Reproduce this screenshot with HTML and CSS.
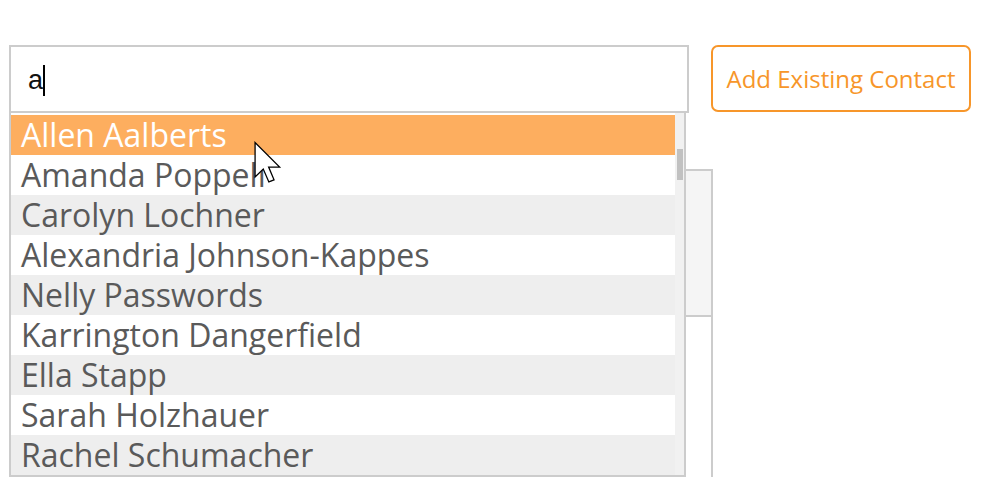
FILE: index.html
```html
<!DOCTYPE html>
<html lang="en">
<head>
<meta charset="utf-8">
<title>Add Existing Contact</title>
<link rel="stylesheet" href="styles.css">
</head>
<body>
<div class="page">
  <div class="top-row">
    <div class="search-wrap">
      <div class="search-field"><span class="typed">a</span><span class="caret"></span></div>
      <div class="dropdown">
        <ul class="results">
          <li class="item active">Allen Aalberts</li>
          <li class="item">Amanda Poppell</li>
          <li class="item alt">Carolyn Lochner</li>
          <li class="item">Alexandria Johnson-Kappes</li>
          <li class="item alt">Nelly Passwords</li>
          <li class="item">Karrington Dangerfield</li>
          <li class="item alt">Ella Stapp</li>
          <li class="item">Sarah Holzhauer</li>
          <li class="item alt">Rachel Schumacher</li>
        </ul>
        <div class="scrollbar"><div class="thumb"></div></div>
      </div>
    </div>
    <button class="add-btn" type="button">Add Existing Contact</button>
  </div>
  <div class="panel">
    <div class="panel-head"></div>
    <div class="panel-body"></div>
  </div>
</div>
<svg class="pointer" width="28" height="44" viewBox="0 0 13 20" xmlns="http://www.w3.org/2000/svg">
  <path d="M0.5 0.5 L0.5 16.5 L4.3 12.8 L6.9 18.8 L9.3 17.8 L6.8 11.9 L11.9 11.9 Z" fill="#fff" stroke="#000" stroke-width="0.6" stroke-linejoin="miter"/>
</svg>
</body>
</html>
```
FILE: styles.css
```css
html, body {
  margin: 0;
  padding: 0;
  background: #fff;
}
body {
  font-family: "Open Sans", "Liberation Sans", sans-serif;
  overflow: hidden;
}
.page {
  padding: 45px 0 0 9px;
}
.top-row {
  display: flex;
  gap: 22px;
  align-items: flex-start;
}
.search-wrap {
  position: relative;
  width: 680px;
}
.search-field {
  box-sizing: border-box;
  height: 68px;
  border: 2px solid #cccccc;
  background: #fff;
  display: flex;
  align-items: center;
  padding-left: 17px;
  font-family: "Liberation Sans", Arial, sans-serif;
  font-size: 27px;
  color: #111;
}
.typed {
  line-height: 30px;
  margin-top: 2px;
}
.caret {
  display: inline-block;
  width: 2px;
  height: 31px;
  background: #000;
  margin-left: 0;
  margin-top: 2px;
}
.dropdown {
  position: absolute;
  top: 100%;
  left: 0;
  z-index: 5;
  box-sizing: border-box;
  width: 677px;
  height: 364px;
  border: 2px solid #cccccc;
  border-top: 0;
  background: #fff;
  display: flex;
}
.results {
  list-style: none;
  margin: 0;
  padding: 2px 0 0 0;
  flex: 1;
}
.item {
  height: 40px;
  line-height: 40px;
  font-size: 32px;
  color: #5a5a5a;
  padding-left: 10px;
  white-space: nowrap;
  background: #fff;
}
.item.alt {
  background: #eeeeee;
}
.item.active {
  background: #fdae5f;
  color: #fff;
}
.scrollbar {
  width: 9px;
  background: #f1f1f1;
  position: relative;
}
.thumb {
  position: absolute;
  left: 2px;
  top: 36px;
  width: 6px;
  height: 31px;
  background: #c1c1c1;
}
.add-btn {
  box-sizing: border-box;
  width: 260px;
  height: 67px;
  border: 2px solid #f7962a;
  border-radius: 7px;
  background: #fff;
  color: #f7962a;
  font-family: "Open Sans", "Liberation Sans", sans-serif;
  font-size: 24px;
  padding: 0;
  cursor: pointer;
}
.panel {
  margin-top: 56px;
  width: 704px;
  box-sizing: border-box;
  border: 2px solid #cccccc;
  border-bottom: 0;
}
.panel-head {
  height: 144px;
  background: #f5f5f5;
  border-bottom: 2px solid #cccccc;
}
.panel-body {
  height: 160px;
  background: #fff;
}
.pointer {
  position: absolute;
  left: 254px;
  top: 141px;
  z-index: 10;
}
```
